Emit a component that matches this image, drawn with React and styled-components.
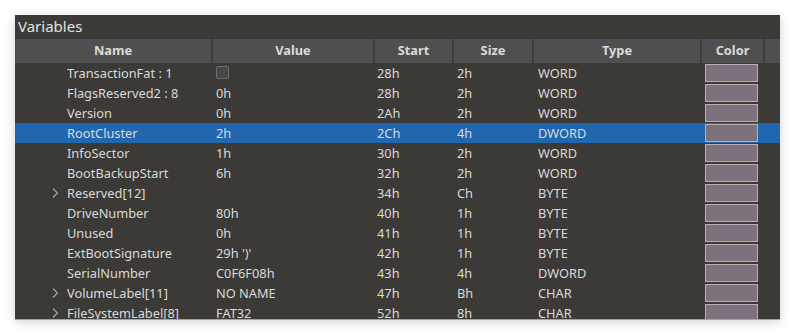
import React from 'react'
import styled, { createGlobalStyle } from 'styled-components'

const GlobalStyle = createGlobalStyle`
  body {
    margin: 0;
    background: #ffffff;
    font-family: "Noto Sans", "Open Sans", sans-serif;
  }
`

const COLS = '198px 162px 79px 80px 168px 63px 15px'

const Page = styled.div`
  padding: 15px;
`
const Panel = styled.div`
  width: 765px;
  height: 305px;
  background: #3c3a36;
  box-shadow: 0 2px 10px rgba(0, 0, 0, 0.18);
  border-bottom: 1px solid #a4a4a4;
  box-sizing: border-box;
  overflow: hidden;
`
const Title = styled.div`
  height: 24px;
  line-height: 22px;
  padding-left: 3px;
  font-size: 15px;
  color: #e2e2e2;
`
const HeaderRow = styled.div`
  display: grid;
  grid-template-columns: ${COLS};
  height: 24px;
  background: #4f4f4f;
`
const HeaderCell = styled.div`
  border-right: 2px solid #3d3d3d;
  text-align: center;
  font-size: 12.8px;
  font-weight: 700;
  line-height: 23px;
  color: #dadada;
  &:last-child {
    border-right: none;
  }
`
const Row = styled.div`
  display: grid;
  grid-template-columns: ${COLS};
  height: 20px;
  background: ${p => (p.$selected ? '#2067b0' : 'transparent')};
`
const Cell = styled.div`
  font-size: 12.8px;
  line-height: 20px;
  color: #d9d9d9;
  padding-left: ${p => p.$pad ?? 3}px;
  white-space: nowrap;
  overflow: hidden;
`
const NameCell = styled(Cell)`
  display: flex;
  align-items: center;
  padding-left: 36px;
`
const Chevron = styled.svg`
  width: 9px;
  height: 10px;
  flex-shrink: 0;
  margin-right: 7px;
`
const Spacer = styled.span`
  width: 16px;
  flex-shrink: 0;
`
const Check = styled.div`
  width: 11px;
  height: 11px;
  margin-top: 3px;
  border: 1px solid #6e6e6e;
  border-radius: 2px;
  background: #48474a;
`
const Swatch = styled.div`
  width: 51px;
  height: 16px;
  margin: 1px 0 0 3px;
  border: 1px solid #b2b2b2;
  background: #7e717e;
`

const rows = [
  { name: 'TransactionFat : 1', value: 'check', start: '28h', size: '2h', type: 'WORD' },
  { name: 'FlagsReserved2 : 8', value: '0h', start: '28h', size: '2h', type: 'WORD' },
  { name: 'Version', value: '0h', start: '2Ah', size: '2h', type: 'WORD' },
  { name: 'RootCluster', value: '2h', start: '2Ch', size: '4h', type: 'DWORD', selected: true },
  { name: 'InfoSector', value: '1h', start: '30h', size: '2h', type: 'WORD' },
  { name: 'BootBackupStart', value: '6h', start: '32h', size: '2h', type: 'WORD' },
  { name: 'Reserved[12]', value: '', start: '34h', size: 'Ch', type: 'BYTE', expand: true },
  { name: 'DriveNumber', value: '80h', start: '40h', size: '1h', type: 'BYTE' },
  { name: 'Unused', value: '0h', start: '41h', size: '1h', type: 'BYTE' },
  { name: 'ExtBootSignature', value: "29h ')'", start: '42h', size: '1h', type: 'BYTE' },
  { name: 'SerialNumber', value: 'C0F6F08h', start: '43h', size: '4h', type: 'DWORD' },
  { name: 'VolumeLabel[11]', value: 'NO NAME', start: '47h', size: 'Bh', type: 'CHAR', expand: true },
  { name: 'FileSystemLabel[8]', value: 'FAT32', start: '52h', size: '8h', type: 'CHAR', expand: true },
]

function VarRow({ row }) {
  return (
    <Row $selected={row.selected}>
      <NameCell>
        {row.expand ? (
          <Chevron viewBox="0 0 9 10">
            <polyline points="2,0.5 6.5,5 2,9.5" fill="none" stroke="#a9a9a9" strokeWidth="1.1" />
          </Chevron>
        ) : (
          <Spacer />
        )}
        {row.name}
      </NameCell>
      <Cell $pad={3}>{row.value === 'check' ? <Check /> : row.value}</Cell>
      <Cell $pad={2}>{row.start}</Cell>
      <Cell $pad={3}>{row.size}</Cell>
      <Cell $pad={4}>{row.type}</Cell>
      <Cell $pad={0}>
        <Swatch />
      </Cell>
      <Cell />
    </Row>
  )
}

export default function App() {
  return (
    <Page>
      <GlobalStyle />
      <Panel>
        <Title>Variables</Title>
        <HeaderRow>
          <HeaderCell>Name</HeaderCell>
          <HeaderCell>Value</HeaderCell>
          <HeaderCell>Start</HeaderCell>
          <HeaderCell>Size</HeaderCell>
          <HeaderCell>Type</HeaderCell>
          <HeaderCell>Color</HeaderCell>
          <HeaderCell />
        </HeaderRow>
        {rows.map(r => (
          <VarRow key={r.name} row={r} />
        ))}
      </Panel>
    </Page>
  )
}
